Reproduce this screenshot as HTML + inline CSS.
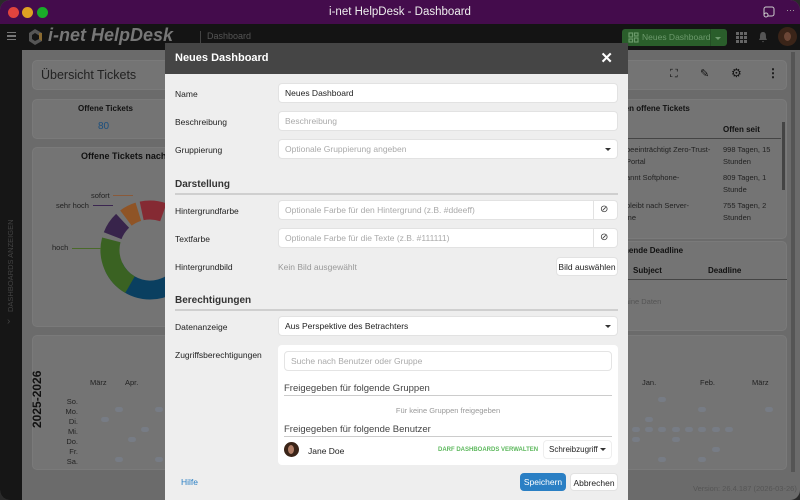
<!DOCTYPE html>
<html><head><meta charset="utf-8"><style>
*{box-sizing:border-box;margin:0;padding:0}
body{width:800px;height:500px;overflow:hidden;background:#2a2a2a;font-family:"Liberation Sans",sans-serif;position:relative}
.win{position:absolute;left:0;top:0;width:800px;height:500px;border-radius:10px;overflow:hidden;background:#6b6b6b}
.title{position:absolute;left:0;top:0;width:800px;height:24px;background:#440c4c;color:#eee;font-size:11.5px;text-align:center;line-height:24px}
.dot{position:absolute;top:7px;width:11px;height:11px;border-radius:50%}
.tb{position:absolute;left:0;top:24px;width:800px;height:26px;background:#141414}
.side{position:absolute;left:0;top:50px;width:22px;height:450px;background:#161616}
.card{position:absolute;background:#747474;border-radius:5px;border:1px solid #7a7a7a}
.t{position:absolute;white-space:nowrap}
.modal{position:absolute;left:165px;top:43px;width:463px;height:457px;background:#eeeeee}
.mh{position:absolute;left:0;top:0;width:463px;height:31px;background:#454545;color:#fff;font-weight:bold;font-size:11px;line-height:31px;padding-left:10px}
.lab{position:absolute;left:10px;font-size:8.5px;color:#222}
.inp{position:absolute;left:113px;width:340px;height:20px;background:#fff;border-radius:4px;border:1px solid #e2e2e2;font-size:8.5px;line-height:18px;padding-left:6px;color:#222}
.ph{color:#aaa}
.sec{position:absolute;left:10px;width:443px;font-size:10px;font-weight:bold;color:#333;border-bottom:2px solid #cfcfcf;padding-bottom:3px}
.caret{position:absolute;right:6px;top:8px;width:0;height:0;border-left:3px solid transparent;border-right:3px solid transparent;border-top:3px solid #333}
.btn{position:absolute;height:18px;border-radius:4px;font-size:8.5px;line-height:18px;text-align:center}
.pk{position:absolute;right:0;top:0;width:24px;height:18px;border-left:1px solid #e2e2e2}
.hm{position:absolute;width:8px;height:5px;border-radius:3px;background:#777c85}
</style></head><body>
<div class="win">
<div class="title">i-net HelpDesk - Dashboard
<div class="dot" style="left:8px;background:#e0443e"></div>
<div class="dot" style="left:22px;background:#dea123"></div>
<div class="dot" style="left:37px;background:#1aab29"></div>
<svg style="position:absolute;left:763px;top:6px" width="12" height="12"><rect x="1" y="1" width="10" height="9" rx="2" fill="none" stroke="#ccc" stroke-width="1"/><circle cx="3" cy="9" r="2" fill="#440c4c" stroke="#ccc"/></svg>
<span style="position:absolute;left:786px;top:-2px;color:#aaa;font-size:9px">···</span>
</div>
<div class="tb">
<div style="position:absolute;left:7px;top:8px;width:9px;height:8px;border-top:1.5px solid #777;border-bottom:1.5px solid #777"><div style="margin-top:2px;height:1.5px;background:#777"></div></div>
<svg style="position:absolute;left:27px;top:4px" width="17" height="18"><path d="M8 1 L15 5 L15 13 L8 17 L2 13 L2 5 Z" fill="#555"/><path d="M8 5 L12 7.5 L12 11 L8 13 L5 11 L5 7 Z" fill="#141414"/><path d="M12 5 L15 5 L15 13 L12 11Z" fill="#8a6a30"/></svg>
<div class="t" style="left:48px;top:1px;color:#777;font-size:18px;font-weight:bold;font-style:italic">i-net HelpDesk</div>
<div style="position:absolute;left:200px;top:7px;width:1px;height:12px;background:#444"></div>
<div class="t" style="left:207px;top:7px;color:#555;font-size:9px">Dashboard</div>
<div style="position:absolute;left:622px;top:5px;width:105px;height:17px;background:#2a5e2b;border-radius:3px"></div>
<svg style="position:absolute;left:628px;top:8px" width="11" height="11"><g fill="none" stroke="#6a9a6a" stroke-width="1.2"><rect x="1" y="1" width="3.5" height="4"/><rect x="6.5" y="1" width="3.5" height="3"/><rect x="1" y="7" width="3.5" height="3"/><rect x="6.5" y="6" width="3.5" height="4"/></g></svg>
<div class="t" style="left:642px;top:8px;color:#6c9a6c;font-size:8.5px">Neues Dashboard</div>
<div style="position:absolute;left:710px;top:5px;width:1px;height:17px;background:#244f25"></div>
<div style="position:absolute;left:715px;top:13px;border-left:3px solid transparent;border-right:3px solid transparent;border-top:3px solid #6c9a6c"></div>
<svg style="position:absolute;left:736px;top:8px" width="11" height="11" fill="#666"><rect x="0" y="0" width="3" height="3"/><rect x="4" y="0" width="3" height="3"/><rect x="8" y="0" width="3" height="3"/><rect x="0" y="4" width="3" height="3"/><rect x="4" y="4" width="3" height="3"/><rect x="8" y="4" width="3" height="3"/><rect x="0" y="8" width="3" height="3"/><rect x="4" y="8" width="3" height="3"/><rect x="8" y="8" width="3" height="3"/></svg>
<svg style="position:absolute;left:758px;top:7px" width="10" height="12"><path d="M5 1 C2 1 2 4 2 7 L1 9 L9 9 L8 7 C8 4 8 1 5 1Z M4 10 L6 10 L5 11.5Z" fill="#555"/></svg>
<div style="position:absolute;left:778px;top:3px;width:19px;height:19px;border-radius:50%;background:#3a2418"><div style="margin:5px 0 0 6px;width:7px;height:9px;border-radius:50%;background:#6b4636"></div></div>
</div>
<div class="side"><div class="t" style="left:6px;top:262px;transform:rotate(-90deg);transform-origin:0 0;color:#444;font-size:7.5px">DASHBOARDS ANZEIGEN</div>
<div class="t" style="left:7px;top:266px;color:#444;font-size:10px">&#8250;</div></div>
<div style="position:absolute;left:791px;top:52px;width:4px;height:420px;background:#555"></div>
<!-- cards -->
<div class="card" style="left:32px;top:60px;width:755px;height:30px"></div>
<div class="t" style="left:41px;top:68px;font-size:12.5px;color:#222">Übersicht Tickets</div>
<div class="t" style="left:670px;top:68px;font-size:11px;color:#111">⛶</div>
<div class="t" style="left:700px;top:67px;font-size:11px;color:#111">✎</div>
<div class="t" style="left:731px;top:66px;font-size:12px;color:#111">⚙</div>
<div class="t" style="left:767px;top:66px;font-size:12px;color:#111;font-weight:bold">⋮</div>
<div class="card" style="left:32px;top:99px;width:145px;height:40px"></div>
<div class="t" style="left:78px;top:104px;font-size:8px;font-weight:bold;color:#111">Offene Tickets</div>
<div class="t" style="left:98px;top:121px;font-size:10px;color:#1b4f7e">80</div>
<div class="card" style="left:32px;top:147px;width:145px;height:180px"></div>
<div class="t" style="left:81px;top:151px;font-size:9px;font-weight:bold;color:#111">Offene Tickets nach</div>
<svg style="position:absolute;left:90px;top:190px" width="90" height="110">
<g fill="none" stroke-width="19">
<circle cx="60" cy="60" r="40" stroke="#0a3f60" stroke-dasharray="150 1000" transform="rotate(-60 60 60)" />
<circle cx="60" cy="60" r="40" stroke="#3a6222" stroke-dasharray="52 1000" transform="rotate(120 60 60)" />
<circle cx="60" cy="60" r="40" stroke="#38244b" stroke-dasharray="18 1000" transform="rotate(201 60 60)" />
<circle cx="60" cy="60" r="40" stroke="#8f5426" stroke-dasharray="14 1000" transform="rotate(233 60 60)" />
<circle cx="60" cy="60" r="40" stroke="#852a33" stroke-dasharray="22 1000" transform="rotate(258 60 60)" />
</g></svg>
<div class="t" style="left:91px;top:191px;font-size:7.5px;color:#222">sofort</div>
<div class="t" style="left:56px;top:201px;font-size:7.5px;color:#222">sehr hoch</div>
<div class="t" style="left:52px;top:243px;font-size:7.5px;color:#222">hoch</div>
<div style="position:absolute;left:72px;top:248px;width:29px;height:1px;background:#4a6a2a"></div>
<div style="position:absolute;left:113px;top:195px;width:20px;height:1px;background:#8a5a3a"></div>
<div style="position:absolute;left:93px;top:205px;width:20px;height:1px;background:#3b2650"></div>
<div class="card" style="left:32px;top:335px;width:755px;height:135px"></div>
<div class="t" style="left:30px;top:428px;transform:rotate(-90deg);transform-origin:0 0;font-size:12px;font-weight:bold;color:#111">2025-2026</div>
<div style="position:absolute;left:64px;top:397px;font-size:7.5px;color:#222;text-align:right;width:14px;line-height:10px">So.<br>Mo.<br>Di.<br>Mi.<br>Do.<br>Fr.<br>Sa.</div>
<div class="t" style="left:90px;top:378px;font-size:7.5px;color:#222">März</div>
<div class="t" style="left:125px;top:378px;font-size:7.5px;color:#222">Apr.</div>
<div class="t" style="left:642px;top:378px;font-size:7.5px;color:#222">Jan.</div>
<div class="t" style="left:700px;top:378px;font-size:7.5px;color:#222">Feb.</div>
<div class="t" style="left:752px;top:378px;font-size:7.5px;color:#222">März</div>
<div class="hm" style="left:115px;top:407px"></div><div class="hm" style="left:155px;top:407px"></div><div class="hm" style="left:101px;top:417px"></div><div class="hm" style="left:141px;top:427px"></div><div class="hm" style="left:128px;top:437px"></div><div class="hm" style="left:115px;top:457px"></div><div class="hm" style="left:155px;top:457px"></div>
<div class="hm" style="left:658px;top:397px"></div><div class="hm" style="left:698px;top:407px"></div><div class="hm" style="left:765px;top:407px"></div><div class="hm" style="left:645px;top:417px"></div>
<div class="hm" style="left:632px;top:427px"></div><div class="hm" style="left:645px;top:427px"></div><div class="hm" style="left:658px;top:427px"></div><div class="hm" style="left:672px;top:427px"></div><div class="hm" style="left:685px;top:427px"></div><div class="hm" style="left:698px;top:427px"></div><div class="hm" style="left:712px;top:427px"></div><div class="hm" style="left:725px;top:427px"></div>
<div class="hm" style="left:632px;top:437px"></div><div class="hm" style="left:672px;top:437px"></div><div class="hm" style="left:712px;top:447px"></div><div class="hm" style="left:658px;top:457px"></div><div class="hm" style="left:698px;top:457px"></div>
<div class="card" style="left:600px;top:99px;width:187px;height:140px"></div>
<div class="t" style="left:622px;top:104px;font-size:8px;font-weight:bold;color:#111">ten offene Tickets</div>
<div class="t" style="left:723px;top:125px;font-size:8px;font-weight:bold;color:#111">Offen seit</div>
<div style="position:absolute;left:628px;top:138px;width:153px;height:1px;background:#444"></div>
<div style="position:absolute;left:782px;top:122px;width:3px;height:68px;background:#444"></div>
<div class="t" style="left:626px;top:144px;font-size:7.5px;color:#222;line-height:11.5px">beeinträchtigt Zero-Trust-<br>Portal</div>
<div class="t" style="left:723px;top:144px;font-size:7.5px;color:#222;line-height:11.5px">998 Tagen, 15<br>Stunden</div>
<div class="t" style="left:626px;top:172px;font-size:7.5px;color:#222;line-height:11.5px">annt Softphone-</div>
<div class="t" style="left:723px;top:172px;font-size:7.5px;color:#222;line-height:11.5px">809 Tagen, 1<br>Stunde</div>
<div class="t" style="left:626px;top:200px;font-size:7.5px;color:#222;line-height:11.5px">bleibt nach Server-<br>ine</div>
<div class="t" style="left:723px;top:200px;font-size:7.5px;color:#222;line-height:11.5px">755 Tagen, 2<br>Stunden</div>
<div class="card" style="left:600px;top:241px;width:187px;height:90px"></div>
<div class="t" style="left:624px;top:246px;font-size:8px;font-weight:bold;color:#111">hende Deadline</div>
<div class="t" style="left:633px;top:266px;font-size:8px;font-weight:bold;color:#111">Subject</div>
<div class="t" style="left:708px;top:266px;font-size:8px;font-weight:bold;color:#111">Deadline</div>
<div style="position:absolute;left:628px;top:279px;width:159px;height:1px;background:#444"></div>
<div class="t" style="left:625px;top:297px;font-size:7.5px;color:#555">aine Daten</div>
<div class="t" style="left:693px;top:484px;font-size:7.5px;color:#555">Version: 26.4.187 (2026-03-26)</div>
<!-- modal -->
<div class="modal">
<div class="mh">Neues Dashboard<span style="position:absolute;right:15px;top:0;font-size:15px">✕</span></div>
<div class="lab" style="top:46px">Name</div><div class="inp" style="top:40px">Neues Dashboard</div>
<div class="lab" style="top:74px">Beschreibung</div><div class="inp ph" style="top:68px">Beschreibung</div>
<div class="lab" style="top:102px">Gruppierung</div><div class="inp ph" style="top:96px">Optionale Gruppierung angeben<div class="caret"></div></div>
<div class="sec" style="top:136px">Darstellung</div>
<div class="lab" style="top:163px">Hintergrundfarbe</div><div class="inp ph" style="top:157px">Optionale Farbe für den Hintergrund (z.B. #ddeeff)<div class="pk"><span style="position:absolute;left:6px;top:0;color:#333;font-size:10px">⊘</span></div></div>
<div class="lab" style="top:191px">Textfarbe</div><div class="inp ph" style="top:185px">Optionale Farbe für die Texte (z.B. #111111)<div class="pk"><span style="position:absolute;left:6px;top:0;color:#333;font-size:10px">⊘</span></div></div>
<div class="lab" style="top:219px">Hintergrundbild</div><div class="t" style="left:113px;top:219px;font-size:8.5px;color:#999">Kein Bild ausgewählt</div>
<div class="btn" style="left:391px;top:214px;width:62px;background:#fff;border:1px solid #e2e2e2;color:#222;height:19px">Bild auswählen</div>
<div class="sec" style="top:252px">Berechtigungen</div>
<div class="lab" style="top:279px">Datenanzeige</div><div class="inp" style="top:273px">Aus Perspektive des Betrachters<div class="caret"></div></div>
<div class="lab" style="top:307px">Zugriffsberechtigungen</div>
<div style="position:absolute;left:113px;top:302px;width:340px;height:120px;background:#fff;border-radius:4px">
<div style="position:absolute;left:6px;top:6px;width:328px;height:20px;border:1px solid #e4e4e4;border-radius:4px;font-size:8.5px;color:#aaa;line-height:18px;padding-left:6px">Suche nach Benutzer oder Gruppe</div>
<div style="position:absolute;left:6px;top:38px;width:328px;font-size:9.5px;color:#444;border-bottom:1px solid #ccc;padding-bottom:1px">Freigegeben für folgende Gruppen</div>
<div style="position:absolute;left:0;top:61px;width:340px;text-align:center;font-size:7.5px;color:#999">Für keine Gruppen freigegeben</div>
<div style="position:absolute;left:6px;top:79px;width:328px;font-size:9.5px;color:#444;border-bottom:1px solid #ccc;padding-bottom:1px">Freigegeben für folgende Benutzer</div>
<div style="position:absolute;left:6px;top:97px;width:15px;height:15px;border-radius:50%;background:#3a2418"><div style="margin:3px 0 0 4px;width:6px;height:9px;border-radius:50%;background:#b07d66"></div></div>
<div class="t" style="left:30px;top:101px;font-size:8.5px;color:#222">Jane Doe</div>
<div class="t" style="left:160px;top:102px;font-size:6px;font-weight:bold;color:#5cb85c">DARF DASHBOARDS VERWALTEN</div>
<div style="position:absolute;left:265px;top:95px;width:69px;height:19px;border:1px solid #eee;border-radius:4px;font-size:8px;line-height:17px;padding-left:5px;color:#222">Schreibzugriff<div class="caret" style="top:7px;right:5px"></div></div>
</div>
<div class="t" style="left:16px;top:434px;font-size:8.5px;color:#2a7fc4">Hilfe</div>
<div class="btn" style="left:355px;top:430px;width:46px;background:#2a7fc4;color:#fff">Speichern</div>
<div class="btn" style="left:405px;top:430px;width:48px;background:#fff;color:#222;border:1px solid #e2e2e2">Abbrechen</div>
</div>
</div>
</body></html>
